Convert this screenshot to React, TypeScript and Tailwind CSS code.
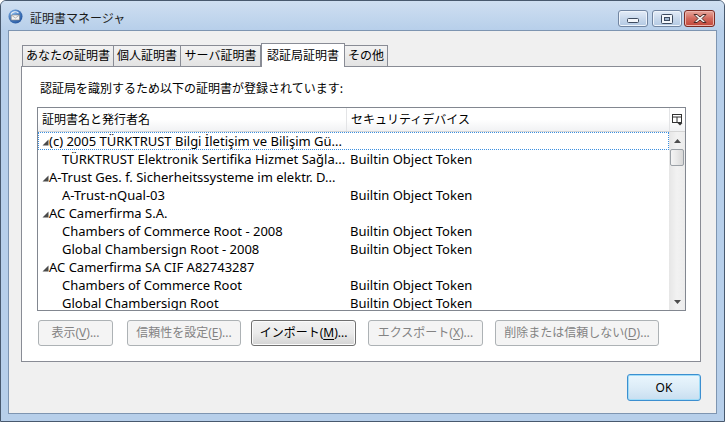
import React from "react";

type Cert = { label: string; device?: string; parent?: boolean; focused?: boolean };

const rows: Cert[] = [
  { label: "(c) 2005 TÜRKTRUST Bilgi İletişim ve Bilişim Gü...", parent: true, focused: true },
  { label: "TÜRKTRUST Elektronik Sertifika Hizmet Sağla...", device: "Builtin Object Token" },
  { label: "A-Trust Ges. f. Sicherheitssysteme im elektr. D...", parent: true },
  { label: "A-Trust-nQual-03", device: "Builtin Object Token" },
  { label: "AC Camerfirma S.A.", parent: true },
  { label: "Chambers of Commerce Root - 2008", device: "Builtin Object Token" },
  { label: "Global Chambersign Root - 2008", device: "Builtin Object Token" },
  { label: "AC Camerfirma SA CIF A82743287", parent: true },
  { label: "Chambers of Commerce Root", device: "Builtin Object Token" },
  { label: "Global Chambersign Root", device: "Builtin Object Token" },
];

const Twisty = () => (
  <svg width="7" height="7" viewBox="0 0 7 7" className="mt-[3px] shrink-0">
    <polygon points="6.5,0.5 6.5,6.5 0.5,6.5" fill="#4a4a4a" />
  </svg>
);

const Row = ({ cert }: { cert: Cert }) => (
  <div
    className={
      cert.focused
        ? "flex h-[18px] shrink-0 items-center whitespace-nowrap text-[13px] outline-1 outline-dotted outline-[#3b8fe0] -outline-offset-1"
        : "flex h-[18px] shrink-0 items-center whitespace-nowrap text-[13px]"
    }
  >
    <div className="flex w-[309px] shrink-0 items-center overflow-hidden">
      {cert.parent ? (
        <>
          <div className="w-[4px] shrink-0" />
          <Twisty />
          <span>{cert.label}</span>
        </>
      ) : (
        <span className="pl-[24px]">{cert.label}</span>
      )}
    </div>
    <div className="pl-[3px]">{cert.device}</div>
  </div>
);

type BtnProps = { pre: string; k: string; post: string; disabled?: boolean; className: string };

const Btn = ({ pre, k, post, disabled, className }: BtnProps) => (
  <div
    className={
      disabled
        ? `flex h-[26px] items-center justify-center rounded-[3px] border border-[#adb2b5] bg-[#f4f4f4] text-[#838383] ${className}`
        : `flex h-[26px] items-center justify-center rounded-[3px] border border-[#707070] bg-gradient-to-b from-[#f2f2f2] via-[#ebebeb] to-[#d4d4d4] text-black shadow-[inset_0_0_0_1px_#fbfbfb] ${className}`
    }
  >
    {pre}
    <span className="underline underline-offset-2">{k}</span>
    {post}
  </div>
);

const CaptionButtons = () => (
  <div className="mt-[9px] flex items-start">
    <div className="flex h-[17px] w-[30px] items-center justify-center rounded-[3px] border border-[#7185a1] bg-gradient-to-b from-[#e4edf8] via-[#c9d9ec] to-[#b3c9e3] shadow-[inset_0_0_0_1px_#eef4fb]">
      <svg width="12" height="6" viewBox="0 0 12 6" className="mt-[5px]">
        <rect x="0.5" y="0.5" width="11" height="4" rx="1" fill="#f4f7fb" stroke="#3d4b5f" />
      </svg>
    </div>
    <div className="ml-[4px] flex h-[17px] w-[30px] items-center justify-center rounded-[3px] border border-[#7185a1] bg-gradient-to-b from-[#e4edf8] via-[#c9d9ec] to-[#b3c9e3] shadow-[inset_0_0_0_1px_#eef4fb]">
      <svg width="12" height="10" viewBox="0 0 12 10">
        <rect x="0.5" y="0.5" width="11" height="9" rx="1" fill="#f4f7fb" stroke="#3d4b5f" />
        <rect x="3.5" y="3.5" width="5" height="3" fill="#9fb3cc" stroke="#3d4b5f" />
      </svg>
    </div>
    <div className="ml-[2px] flex h-[17px] w-[31px] items-center justify-center rounded-[3px] border border-[#7b2b24] bg-gradient-to-b from-[#e6a89e] via-[#d2695d] to-[#c2463a] shadow-[inset_0_0_0_1px_#eeb5ad]">
      <svg width="14" height="11" viewBox="0 0 14 11">
        <path
          d="M1 1.5 L4 1.5 L7 4 L10 1.5 L13 1.5 L9 5.5 L13 9.5 L10 9.5 L7 7 L4 9.5 L1 9.5 L5 5.5 Z"
          fill="#f6f6f6"
          stroke="#4a2a27"
          strokeWidth="1"
          strokeLinejoin="round"
        />
      </svg>
    </div>
  </div>
);

const AppIcon = () => (
  <svg width="15" height="15" viewBox="0 0 15 15" className="mt-[8px] ml-[7px] shrink-0">
    <defs>
      <radialGradient id="g" cx="0.35" cy="0.3" r="0.8">
        <stop offset="0" stopColor="#7fb3ea" />
        <stop offset="1" stopColor="#1d4f9a" />
      </radialGradient>
    </defs>
    <circle cx="7.5" cy="7.5" r="7" fill="url(#g)" />
    <path d="M3.2 6 L11.5 6 L11.5 11 L3.2 11 Z" fill="#f3f3f3" stroke="#7d7d7d" strokeWidth="0.6" />
    <path d="M3.2 6 L7.4 9 L11.5 6" fill="none" stroke="#8a8a8a" strokeWidth="0.6" />
    <path d="M3 5.5 C4 2.5 8 2 10.5 4" fill="none" stroke="#e9eef5" strokeWidth="1.1" />
  </svg>
);

const ColumnPicker = () => (
  <svg width="11" height="12" viewBox="0 0 11 12">
    <rect x="0.5" y="0.5" width="9" height="8" fill="#fff" stroke="#333" />
    <line x1="0.5" y1="3" x2="9.5" y2="3" stroke="#333" />
    <line x1="5" y1="3" x2="5" y2="8.5" stroke="#333" />
    <polygon points="5.5,9 10.5,9 8,11.5" fill="#333" />
  </svg>
);

const ScrollBar = () => (
  <div className="flex w-[16px] shrink-0 flex-col bg-gradient-to-r from-[#e6e6e6] via-[#f2f2f2] to-[#ececec]">
    <div className="flex h-[17px] shrink-0 items-center justify-center">
      <svg width="7" height="4" viewBox="0 0 7 4">
        <polygon points="3.5,0 7,4 0,4" fill="#4d4d4d" />
      </svg>
    </div>
    <div className="mx-[1px] h-[17px] shrink-0 rounded-[2px] border border-[#9aa0a6] bg-gradient-to-r from-[#f4f4f4] via-[#e8e8e8] to-[#d7d7d7]" />
    <div className="flex-1" />
    <div className="flex h-[17px] shrink-0 items-center justify-center">
      <svg width="7" height="4" viewBox="0 0 7 4">
        <polygon points="0,0 7,0 3.5,4" fill="#4d4d4d" />
      </svg>
    </div>
  </div>
);

const tabs = ["あなたの証明書", "個人証明書", "サーバ証明書", "認証局証明書", "その他"];
const tabWidths = ["w-[92px]", "w-[68px]", "w-[81px]", "w-[84px]", "w-[44px]"];

export default function App() {
  return (
    <div className="flex h-[422px] w-[725px] flex-col overflow-hidden rounded-t-[6px] border border-[#48596e] bg-[#b7cfea] font-['Noto_Sans','Noto_Sans_CJK_JP',sans-serif] text-[12px] leading-[16px] text-black">
      {/* Title bar */}
      <div className="flex h-[29px] shrink-0 items-start bg-gradient-to-b from-[#cfdff1] to-[#b7cfea]">
        <AppIcon />
        <div className="mt-[9px] ml-[7px] text-[#1b1b1b] font-['Noto_Sans_CJK_JP',sans-serif]">証明書マネージャ</div>
        <div className="flex-1" />
        <div className="mr-[9px]">
          <CaptionButtons />
        </div>
      </div>

      {/* Client */}
      <div className="mx-[7px] mb-[7px] flex flex-1 flex-col border border-[#7e95b1] bg-[#f0f0f0]">
        <div className="ml-[12px] w-[680px]">
          {/* Tabs */}
          <div className="mt-[12px] flex h-[23px] items-end pl-[1px]">
            {tabs.map((t, i) =>
              i === 3 ? (
                <div
                  key={t}
                  className={`relative z-10 -mb-px flex h-[24px] items-center justify-center border border-b-0 border-[#898c95] bg-white ${tabWidths[i]}`}
                >
                  {t}
                </div>
              ) : (
                <div
                  key={t}
                  className={`flex h-[21px] items-center justify-center border border-b-0 border-[#898c95] bg-gradient-to-b from-[#f2f2f2] to-[#e3e3e3] ${i === 4 ? "-ml-px" : ""} ${i > 0 && i < 3 ? "-ml-px" : ""} ${tabWidths[i]}`}
                >
                  {t}
                </div>
              )
            )}
          </div>

          {/* Panel */}
          <div className="flex h-[296px] flex-col border border-[#898c95] bg-white">
            <div className="mt-[13px] ml-[18px] font-['Noto_Sans_CJK_JP',sans-serif]">
              認証局を識別するため以下の証明書が登録されています:
            </div>

            {/* Tree */}
            <div className="mt-[11px] ml-[15px] flex h-[204px] w-[649px] flex-col border border-[#828790]">
              <div className="flex h-[24px] shrink-0 border-b border-[#d5d5d5] bg-gradient-to-b from-white via-white to-[#f1f2f4]">
                <div className="flex w-[309px] items-center border-r border-[#e3e4e6] pl-[4px]">証明書名と発行者名</div>
                <div className="flex flex-1 items-center pl-[4px]">セキュリティデバイス</div>
                <div className="flex w-[16px] items-center justify-center border-l border-[#e3e4e6]">
                  <ColumnPicker />
                </div>
              </div>
              <div className="flex h-[178px] shrink-0 overflow-hidden">
                <div className="flex w-[631px] flex-col">
                  {rows.map((r, i) => (
                    <Row key={i} cert={r} />
                  ))}
                </div>
                <ScrollBar />
              </div>
            </div>

            {/* Buttons */}
            <div className="mt-[9px] ml-[16px] flex">
              <Btn pre="表示(" k="V" post=")..." disabled className="w-[75px]" />
              <Btn pre="信頼性を設定(" k="E" post=")..." disabled className="ml-[14px] w-[114px]" />
              <Btn pre="インポート(" k="M" post=")..." className="ml-[10px] w-[105px]" />
              <Btn pre="エクスポート(" k="X" post=")..." disabled className="ml-[12px] w-[115px]" />
              <Btn pre="削除または信頼しない(" k="D" post=")..." disabled className="ml-[12px] w-[164px]" />
            </div>
          </div>

          {/* OK */}
          <div className="mt-[12px] flex justify-end">
            <div className="flex h-[27px] w-[74px] items-center justify-center rounded-[3px] border border-[#3c8fd0] bg-gradient-to-b from-[#eaf6fd] via-[#dcecf7] to-[#c8def0] shadow-[inset_0_0_0_1px_#9fdcf8]">
              OK
            </div>
          </div>
        </div>
      </div>
    </div>
  );
}
